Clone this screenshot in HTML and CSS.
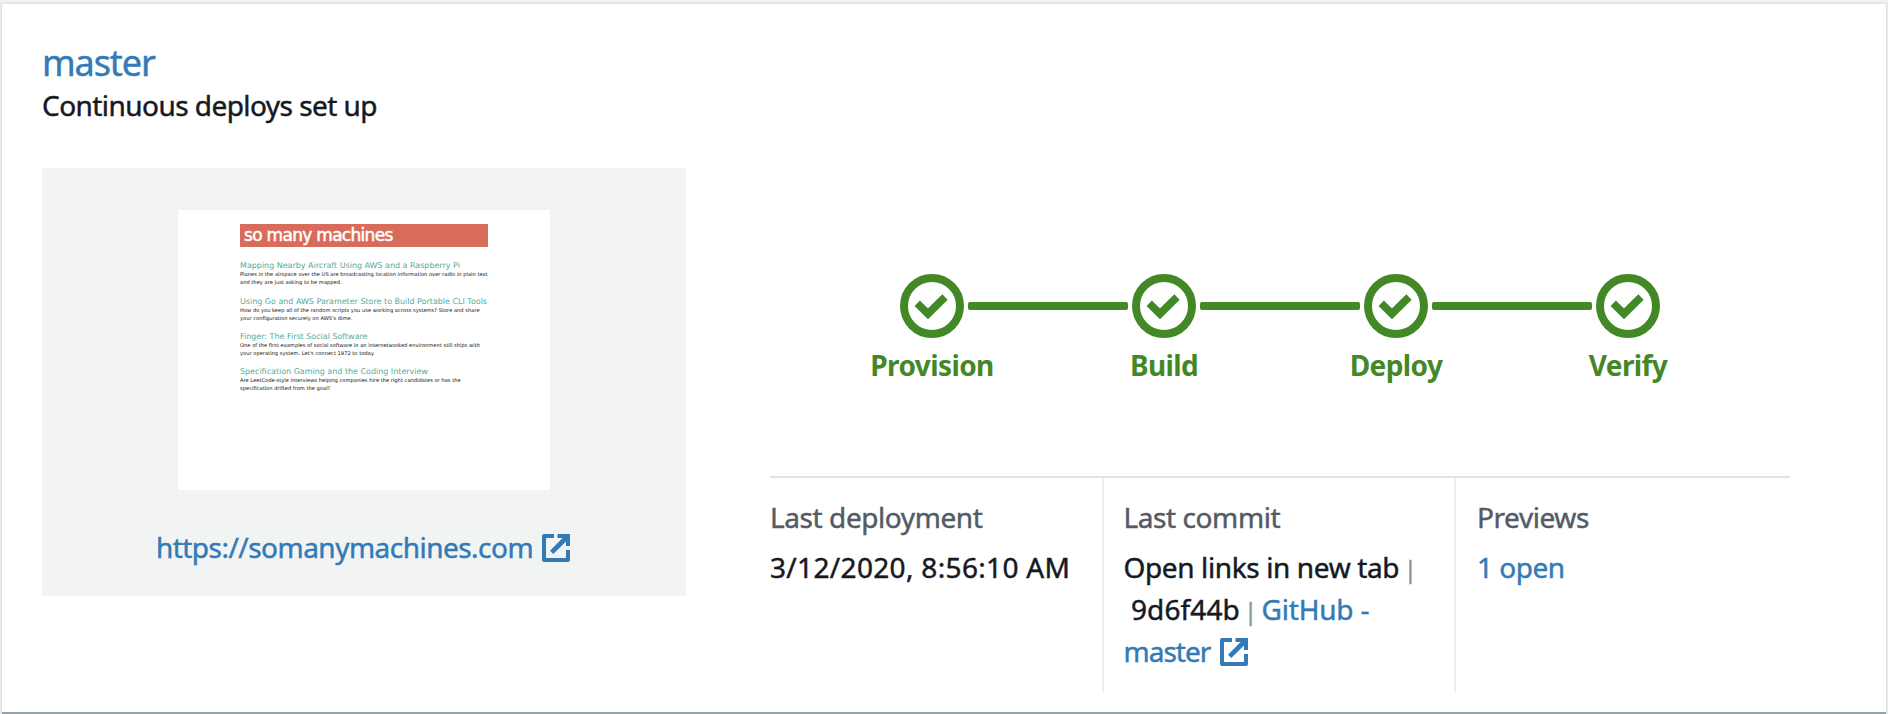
FILE: index.html
```html
<!DOCTYPE html>
<html lang="en">
<head>
<meta charset="utf-8">
<title>master</title>
<link rel="stylesheet" href="styles.css">
</head>
<body>
<svg class="defs" width="0" height="0">
  <symbol id="external" viewBox="0 0 28 28">
    <path d="M12 2H2V26H26V16" fill="none" stroke="currentColor" stroke-width="4" stroke-linejoin="round"/>
    <path d="M15.5 0H28V12H24V7.4L11.3 20L8 16.7L20.6 4H15.5Z" fill="currentColor"/>
  </symbol>
  <symbol id="check" viewBox="0 0 64 64">
    <circle cx="32" cy="32" r="28" fill="none" stroke="currentColor" stroke-width="8"/>
    <path d="M17.2 29.2L28 39.8L45 23" fill="none" stroke="currentColor" stroke-width="7.6"/>
  </symbol>
</svg>
<main class="card">
  <header class="card-header">
    <h2 class="branch"><a class="link" href="#">master</a></h2>
    <p class="status">Continuous deploys set up</p>
  </header>
  <div class="card-body">
    <section class="preview">
      <div class="thumb">
        <div class="site-title"><span>so many machines</span></div>
        <article class="post"><h3>Mapping Nearby Aircraft Using AWS and a Raspberry Pi</h3><p>Planes in the airspace over the US are broadcasting location information over radio in plain text<br>and they are just asking to be mapped.</p></article>
        <article class="post"><h3>Using Go and AWS Parameter Store to Build Portable CLI Tools</h3><p>How do you keep all of the random scripts you use working across systems? Store and share<br>your configuration securely on AWS's dime.</p></article>
        <article class="post"><h3>Finger: The First Social Software</h3><p>One of the first examples of social software in an internetworked environment still ships with<br>your operating system. Let's connect 1972 to today.</p></article>
        <article class="post"><h3>Specification Gaming and the Coding Interview</h3><p>Are LeetCode-style interviews helping companies hire the right candidates or has the<br>specification drifted from the goal?</p></article>
      </div>
      <a class="link site-link" href="#"><span class="url">https://somanymachines.com</span><svg class="ext"><use href="#external"/></svg></a>
    </section>
    <section class="details">
      <ol class="steps">
        <li class="step"><svg class="check"><use href="#check"/></svg><span>Provision</span></li>
        <li class="bar"></li>
        <li class="step"><svg class="check"><use href="#check"/></svg><span>Build</span></li>
        <li class="bar"></li>
        <li class="step"><svg class="check"><use href="#check"/></svg><span>Deploy</span></li>
        <li class="bar"></li>
        <li class="step"><svg class="check"><use href="#check"/></svg><span>Verify</span></li>
      </ol>
      <dl class="facts">
        <div class="fact deployment"><dt>Last deployment</dt><dd>3/12/2020, 8:56:10 AM</dd></div>
        <div class="fact commit"><dt>Last commit</dt><dd><span class="message">Open links in new tab</span><span class="pipe">|</span><br><span class="hash">9d6f44b</span><span class="pipe">|</span><a class="link" href="#"><span class="repo">GitHub -</span><br><span class="ref">master</span><svg class="ext"><use href="#external"/></svg></a></dd></div>
        <div class="fact previews"><dt>Previews</dt><dd><a class="link" href="#">1 open</a></dd></div>
      </dl>
    </section>
  </div>
</main>
</body>
</html>
```
FILE: styles.css
```css
* { box-sizing: border-box; margin: 0; padding: 0; }
body {
  width: 1888px; height: 714px; overflow: hidden;
  padding: 4px 2px 0; background: #f0f2f2;
  font: 28px/42px "Noto Sans", "Open Sans", sans-serif; color: #16191f;
  -webkit-text-stroke: 0.45px currentColor;
}
.defs { display: block; }
.card {
  height: 710px; padding: 38px 40px 0; background: #fff;
  border-bottom: 2px solid #95a3a4; box-shadow: 0 0 2px 1px #d5dbdb;
}
.link { color: #337ab7; text-decoration: none; }
.branch { font-size: 36px; font-weight: 400; height: 42px; letter-spacing: -1.1px; }
.status { height: 42px; letter-spacing: -0.55px; }
.card-body { display: flex; margin-top: 42px; gap: 84px; }
.preview {
  width: 644px; height: 428px; padding-top: 42px; background: #f2f4f4;
  display: flex; flex-direction: column; align-items: center;
}
.thumb {
  width: 372px; height: 280px; padding: 14px 62px; background: #fff;
  font-family: "DejaVu Sans", sans-serif;
  -webkit-text-stroke: 0;
}
.site-title {
  height: 23px; margin-bottom: 12px; padding-left: 4px; background: #d96b5b;
  color: #fff; font-size: 17px; line-height: 23px; white-space: nowrap;
  letter-spacing: -0.7px; -webkit-text-stroke: 0.5px #fff;
}
.post { height: 35.33px; padding-top: 2.2px; white-space: nowrap; }
.post h3 { font-size: 7.97px; line-height: 10px; font-weight: 400; color: #53ab9b; }
.post p { font-size: 5.17px; line-height: 8px; margin-top: -0.8px; color: #111; }
.site-link { display: flex; align-items: center; gap: 9px; margin: 36px 2px 0 0; }
.url { letter-spacing: -0.52px; }
.ext { width: 28px; height: 28px; display: inline-block; }
.site-link .ext { margin-top: 2px; }
.details { width: 1020px; padding-top: 106px; }
.steps { display: flex; list-style: none; justify-content: center; height: 202px; }
.step {
  width: 64px; display: flex; flex-direction: column; align-items: center;
  color: #438827; font-weight: 700; white-space: nowrap; letter-spacing: -0.6px;
  -webkit-text-stroke: 0;
}
.check { width: 64px; height: 64px; margin-bottom: 6px; flex: none; }
.bar { width: 160px; height: 8px; margin: 28px 4px 0; border-radius: 2px; background: #438827; }
.facts { display: grid; grid-template-columns: 332px 352px 336px; height: 216px; border-top: 2px solid #dfe4e4; }
.fact { padding: 18px 0 0 19.5px; border-left: 2px solid #eaeded; white-space: nowrap; }
.deployment { padding-left: 0; border-left: 0; }
.previews { padding-left: 21px; letter-spacing: -0.5px; }
.fact dt { color: #545b64; margin-bottom: 8px; letter-spacing: -0.42px; }
.deployment dd { letter-spacing: 0.33px; }
.pipe { color: #879596; font-size: 23px; line-height: 1; }
.message { margin-right: 5px; letter-spacing: -0.38px; }
.hash { margin: 0 4.5px 0 7.5px; letter-spacing: 0.1px; }
.repo { margin-left: 4.5px; letter-spacing: -0.2px; }
.ref { margin-right: 9.5px; letter-spacing: -1px; }
.commit .ext { vertical-align: -4px; }
```
